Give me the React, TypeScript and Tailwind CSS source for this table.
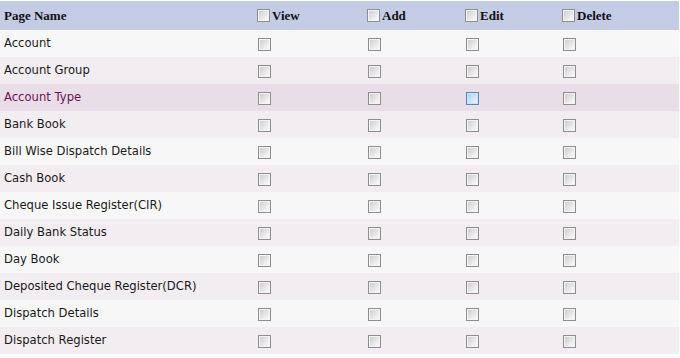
import React from 'react'

const pages = [
  'Account',
  'Account Group',
  'Account Type',
  'Bank Book',
  'Bill Wise Dispatch Details',
  'Cash Book',
  'Cheque Issue Register(CIR)',
  'Daily Bank Status',
  'Day Book',
  'Deposited Cheque Register(DCR)',
  'Dispatch Details',
  'Dispatch Register',
]

const columns = ['View', 'Add', 'Edit', 'Delete']

// XP-style grey checkbox
function Box({ hot = false }: { hot?: boolean }) {
  return (
    <span
      className={
        hot
          ? 'block w-[13px] h-[13px] border border-[#5b86b8] p-px bg-[#c9e4f7]'
          : 'block w-[13px] h-[13px] border border-[#8e8e8e] p-px bg-[#f4f4f4]'
      }
    >
      <span
        className={
          hot
            ? 'block w-full h-full bg-gradient-to-br from-[#a9d5f2] to-[#eaf6fd]'
            : 'block w-full h-full bg-gradient-to-br from-[#cfcfcf] to-[#fbfbfb]'
        }
      />
    </span>
  )
}

const grid = 'grid grid-cols-[254px_110px_98px_97px_1fr] items-center'

export default function App() {
  return (
    <div className="w-[680px] h-[358px] bg-white pt-px pr-px font-['DejaVu_Sans',Verdana,sans-serif]">
      <div className={`${grid} h-[29px] bg-[#c3cbe5] font-['Liberation_Serif',serif] font-bold text-[13px] text-[#111]`}>
        <div className="pl-1">Page Name</div>
        {columns.map(c => (
          <div key={c} className="flex items-center">
            <span className="ml-[3px] mr-[2px]">
              <Box />
            </span>
            <span>{c}</span>
          </div>
        ))}
      </div>

      {pages.map((p, i) => {
        const hover = p === 'Account Type'
        const bg = hover ? 'bg-[#e9dde8]' : i % 2 === 0 ? 'bg-[#f7f7f7]' : 'bg-[#f2edf1]'
        return (
          <div key={p} className={`${grid} h-[27px] ${bg} text-[11.6px]`}>
            <div className={hover ? 'pl-1 pt-px text-[#6b1452]' : 'pl-1 pt-px text-[#1a1a1a]'}>{p}</div>
            {columns.map(c => (
              <div key={c} className="pl-1 pt-px">
                <Box hot={hover && c === 'Edit'} />
              </div>
            ))}
          </div>
        )
      })}
    </div>
  )
}
